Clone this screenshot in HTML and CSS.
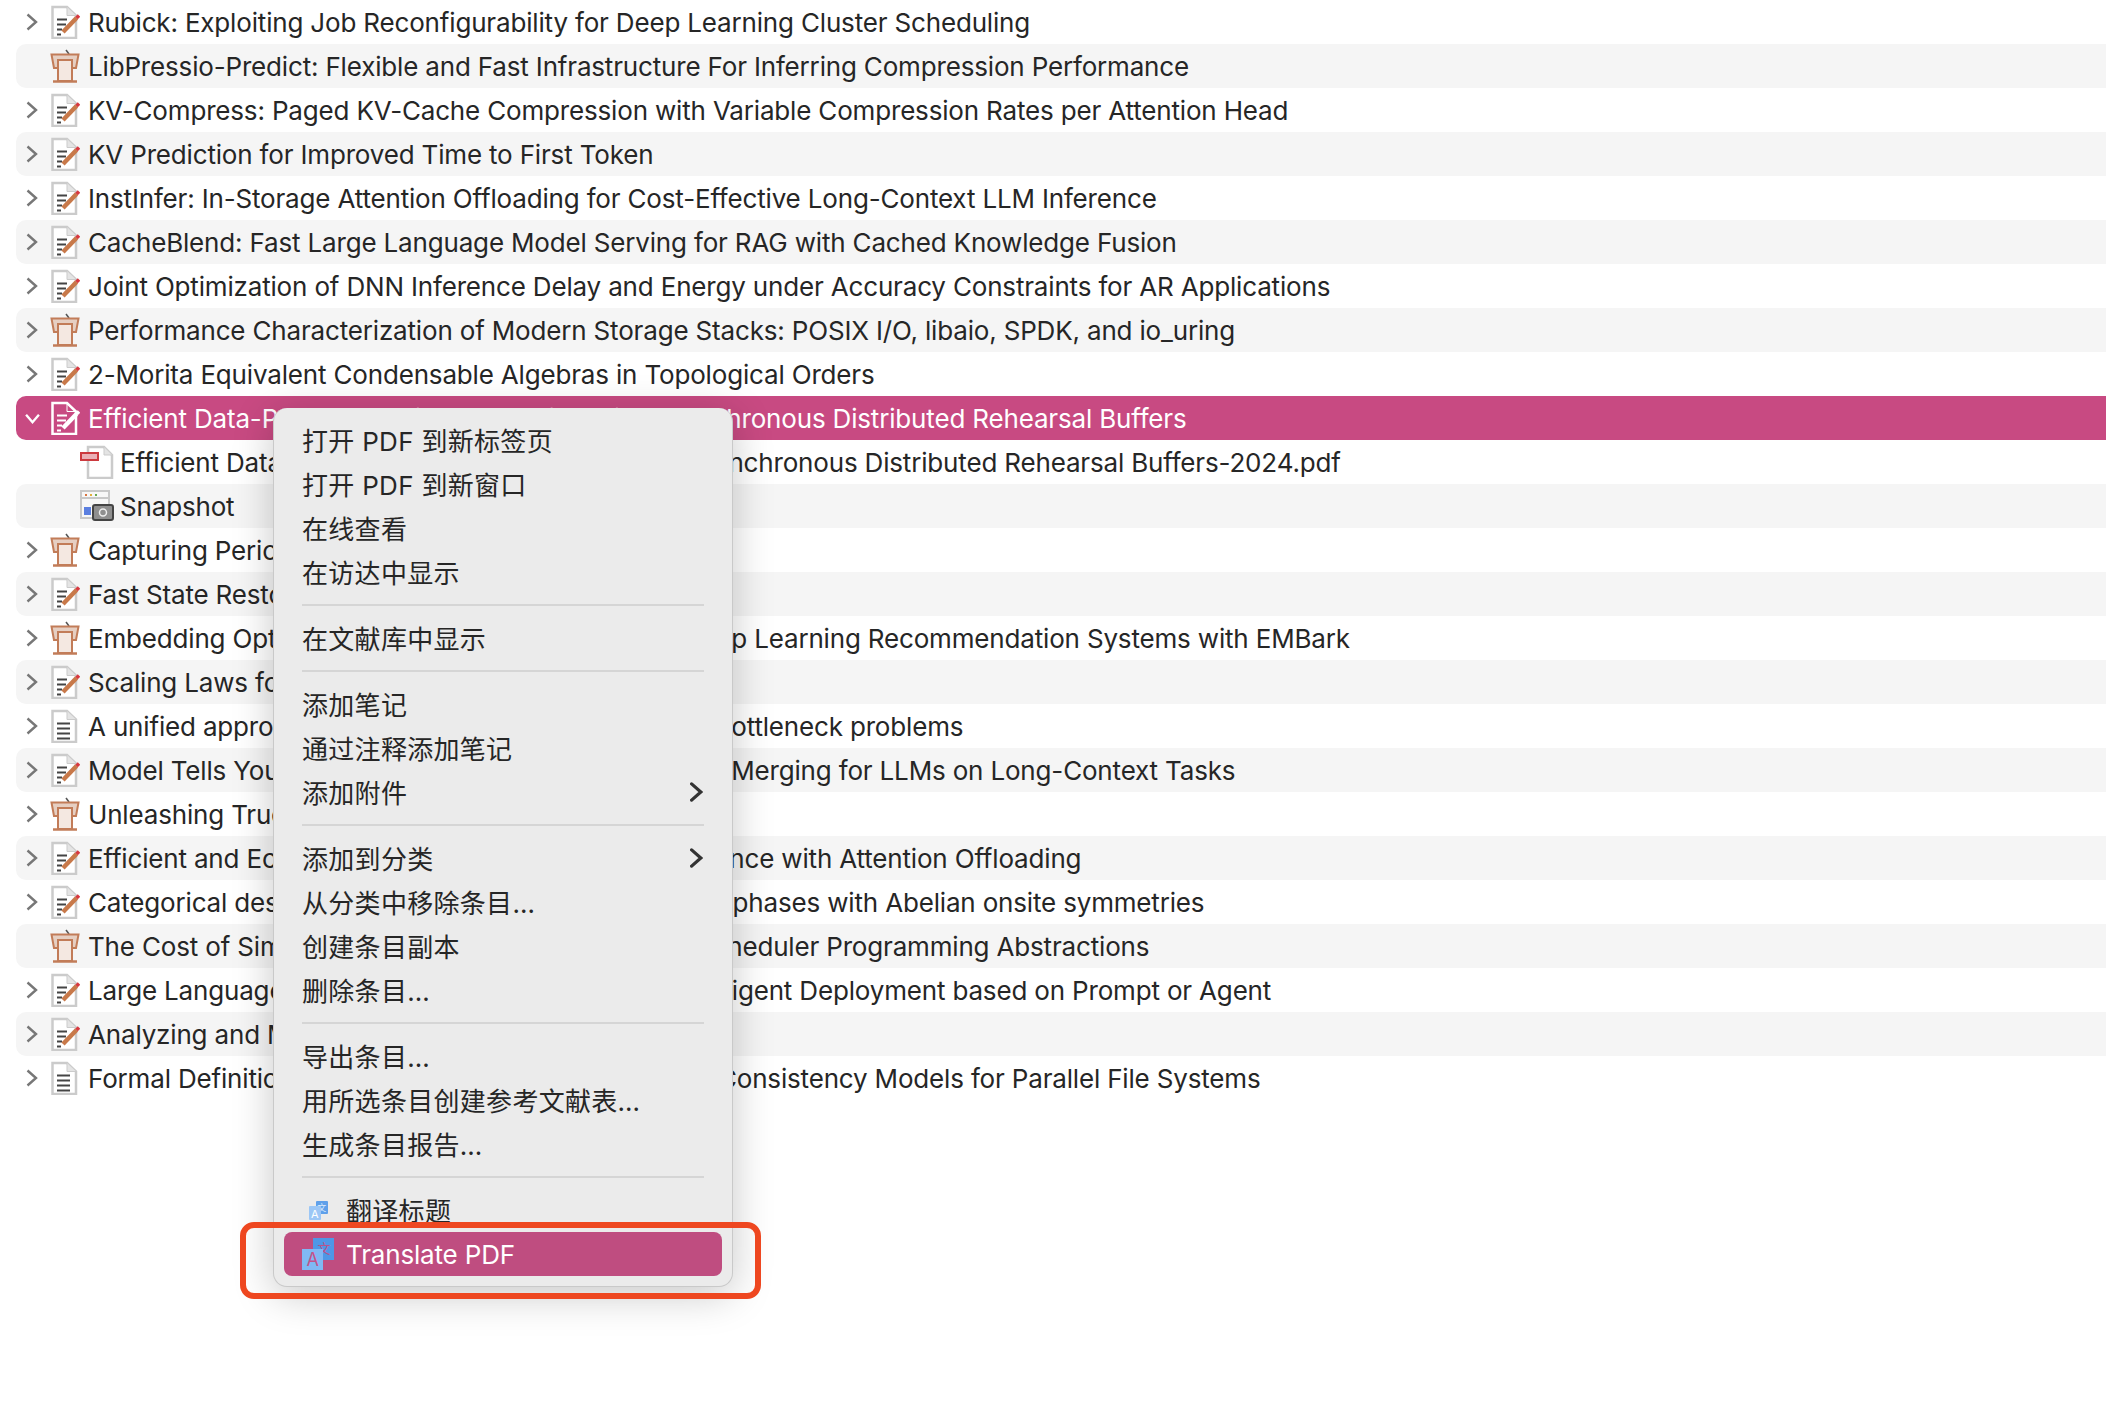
FILE: index.html
```html
<!DOCTYPE html>
<html lang="zh-CN">
<head>
    <meta charset="UTF-8">
    <title>Library</title>
    <link rel="stylesheet" href="styles.css">
</head>
<body>
    <svg class="defs" width="0" height="0">
        <symbol id="note" viewBox="0 0 30 34">
            <path class="page" d="M2.500 2H17L26 10.500V33H2.500Z"/>
            <path class="fold" d="M17 2V10.500H26"/>
            <path class="lines" d="M7 14.500H17M7 19.500H16M7 24.500H12M7 29.500H11"/>
            <path class="pencil" d="M13 27L26.500 13"/>
            <path class="tip" d="M26.500 13L29 10.500"/>
        </symbol>
        <symbol id="doc" viewBox="0 0 30 34">
            <path class="page" d="M2.500 2H17L26 10.500V33H2.500Z"/>
            <path class="fold" d="M17 2V10.500H26"/>
            <path class="lines" d="M7 14.500H20M7 19.500H20M7 24.500H20M7 29.500H20"/>
        </symbol>
        <symbol id="talk" viewBox="0 0 30 34">
            <path class="talk-tick" d="M16 1L19 5"/>
            <path class="talk-body" d="M8 11H22V32H8Z"/>
            <path class="talk-top" d="M1.500 5.500H28.500L26 19H22V11H8V19H4Z"/>
            <path class="talk-base" d="M3 32.500H27"/>
        </symbol>
        <symbol id="pdf" viewBox="0 0 34 34">
            <path class="page" d="M8 2H24L32 10V33H8Z"/>
            <path class="fold" d="M24 2V10H32"/>
            <rect class="pdf-tag" x="1" y="8" width="17" height="7"/>
        </symbol>
        <symbol id="snap" viewBox="0 0 34 32">
            <rect class="snap-win" x="1" y="1" width="28" height="27"/>
            <path class="snap-bar" d="M1 8H29"/>
            <path d="M5 5H7" stroke="#d9743f" stroke-width="2"/>
            <path d="M10 5H12" stroke="#e0b03a" stroke-width="2"/>
            <path d="M15 5H17" stroke="#6aa84f" stroke-width="2"/>
            <rect x="4" y="17" width="7" height="8" fill="#5b7fe0"/>
            <rect class="snap-cam" x="13" y="15" width="20" height="15" rx="2"/>
            <circle cx="23" cy="22.500" r="3.500" fill="none" stroke="#eee" stroke-width="1.500"/>
        </symbol>
        <symbol id="chev-right" viewBox="0 0 12 18">
            <path class="chev-path" d="M1.500 1.500L10 9L1.500 16.500"/>
        </symbol>
        <symbol id="chev-down" viewBox="0 0 18 12">
            <path d="M2 2L9 10L16 2" fill="none" stroke="currentColor" stroke-width="2.600"/>
        </symbol>
    </svg>

    <div class="list">
        <div class="row"><svg class="chev"><use href="#chev-right"/></svg><svg class="icon"><use href="#note"/></svg><span class="title">Rubick: Exploiting Job Reconfigurability for Deep Learning Cluster Scheduling</span></div>
        <div class="row"><span class="chev"></span><svg class="icon"><use href="#talk"/></svg><span class="title">LibPressio-Predict: Flexible and Fast Infrastructure For Inferring Compression Performance</span></div>
        <div class="row"><svg class="chev"><use href="#chev-right"/></svg><svg class="icon"><use href="#note"/></svg><span class="title">KV-Compress: Paged KV-Cache Compression with Variable Compression Rates per Attention Head</span></div>
        <div class="row"><svg class="chev"><use href="#chev-right"/></svg><svg class="icon"><use href="#note"/></svg><span class="title">KV Prediction for Improved Time to First Token</span></div>
        <div class="row"><svg class="chev"><use href="#chev-right"/></svg><svg class="icon"><use href="#note"/></svg><span class="title">InstInfer: In-Storage Attention Offloading for Cost-Effective Long-Context LLM Inference</span></div>
        <div class="row"><svg class="chev"><use href="#chev-right"/></svg><svg class="icon"><use href="#note"/></svg><span class="title">CacheBlend: Fast Large Language Model Serving for RAG with Cached Knowledge Fusion</span></div>
        <div class="row"><svg class="chev"><use href="#chev-right"/></svg><svg class="icon"><use href="#note"/></svg><span class="title">Joint Optimization of DNN Inference Delay and Energy under Accuracy Constraints for AR Applications</span></div>
        <div class="row"><svg class="chev"><use href="#chev-right"/></svg><svg class="icon"><use href="#talk"/></svg><span class="title">Performance Characterization of Modern Storage Stacks: POSIX I/O, libaio, SPDK, and io_uring</span></div>
        <div class="row"><svg class="chev"><use href="#chev-right"/></svg><svg class="icon"><use href="#note"/></svg><span class="title">2-Morita Equivalent Condensable Algebras in Topological Orders</span></div>
        <div class="row selected"><svg class="chev-open"><use href="#chev-down"/></svg><svg class="icon"><use href="#note"/></svg><span class="title">Efficient Data-Parallel Continual Learning with Asynchronous Distributed Rehearsal Buffers</span></div>
        <div class="row child"><svg class="icon pdf"><use href="#pdf"/></svg><span class="title">Efficient Data-Parallel Continual Learning with Asynchronous Distributed Rehearsal Buffers-2024.pdf</span></div>
        <div class="row child"><svg class="icon pdf"><use href="#snap"/></svg><span class="title">Snapshot</span></div>
        <div class="row"><svg class="chev"><use href="#chev-right"/></svg><svg class="icon"><use href="#talk"/></svg><span class="title">Capturing Periodic I/O</span></div>
        <div class="row"><svg class="chev"><use href="#chev-right"/></svg><svg class="icon"><use href="#note"/></svg><span class="title">Fast State Restoration</span></div>
        <div class="row"><svg class="chev"><use href="#chev-right"/></svg><svg class="icon"><use href="#talk"/></svg><span class="title">Embedding Optimization in Training Reduction in Deep Learning Recommendation Systems with EMBark</span></div>
        <div class="row"><svg class="chev"><use href="#chev-right"/></svg><svg class="icon"><use href="#note"/></svg><span class="title">Scaling Laws for Neural Language Models</span></div>
        <div class="row"><svg class="chev"><use href="#chev-right"/></svg><svg class="icon"><use href="#doc"/></svg><span class="title">A unified approach to non-convex optimization and bottleneck problems</span></div>
        <div class="row"><svg class="chev"><use href="#chev-right"/></svg><svg class="icon"><use href="#note"/></svg><span class="title">Model Tells You Where to Merge Adaptive KV Cache Merging for LLMs on Long-Context Tasks</span></div>
        <div class="row"><svg class="chev"><use href="#chev-right"/></svg><svg class="icon"><use href="#talk"/></svg><span class="title">Unleashing True Performance</span></div>
        <div class="row"><svg class="chev"><use href="#chev-right"/></svg><svg class="icon"><use href="#note"/></svg><span class="title">Efficient and Economic Large Language Model Inference with Attention Offloading</span></div>
        <div class="row"><svg class="chev"><use href="#chev-right"/></svg><svg class="icon"><use href="#note"/></svg><span class="title">Categorical descriptions of one-dimensional gapped phases with Abelian onsite symmetries</span></div>
        <div class="row"><span class="chev"></span><svg class="icon"><use href="#talk"/></svg><span class="title">The Cost of Simplicity: Understanding Datacenter Scheduler Programming Abstractions</span></div>
        <div class="row"><svg class="chev"><use href="#chev-right"/></svg><svg class="icon"><use href="#note"/></svg><span class="title">Large Language Model Selection Framework on Intelligent Deployment based on Prompt or Agent</span></div>
        <div class="row"><svg class="chev"><use href="#chev-right"/></svg><svg class="icon"><use href="#note"/></svg><span class="title">Analyzing and Mitigating</span></div>
        <div class="row"><svg class="chev"><use href="#chev-right"/></svg><svg class="icon"><use href="#doc"/></svg><span class="title">Formal Definitions and Performance Comparison of Consistency Models for Parallel File Systems</span></div>
    </div>

    <div class="menu">
        <div class="item">打开 PDF 到新标签页</div>
        <div class="item">打开 PDF 到新窗口</div>
        <div class="item">在线查看</div>
        <div class="item">在访达中显示</div>
        <div class="sep"></div>
        <div class="item">在文献库中显示</div>
        <div class="sep"></div>
        <div class="item">添加笔记</div>
        <div class="item">通过注释添加笔记</div>
        <div class="item">添加附件<svg class="sub"><use href="#chev-right"/></svg></div>
        <div class="sep"></div>
        <div class="item">添加到分类<svg class="sub"><use href="#chev-right"/></svg></div>
        <div class="item">从分类中移除条目…</div>
        <div class="item">创建条目副本</div>
        <div class="item">删除条目…</div>
        <div class="sep"></div>
        <div class="item">导出条目…</div>
        <div class="item">用所选条目创建参考文献表…</div>
        <div class="item">生成条目报告…</div>
        <div class="sep"></div>
        <div class="item with-icon">
            <svg class="tr-small" viewBox="0 0 19 19">
                <rect x="7" y="0" width="12" height="13" rx="1" fill="#5fa0ea"/>
                <text x="13" y="10" class="tr-back">文</text>
                <rect x="0" y="5" width="12" height="14" rx="1" fill="#9cc7f6"/>
                <text x="6" y="16.500" class="tr-front">A</text>
            </svg>翻译标题
        </div>
        <div class="item with-icon active">
            <svg class="tr-large" viewBox="0 0 32 32">
                <rect x="11" y="0" width="21" height="22" fill="#4f97e6"/>
                <text x="22" y="15" class="tr-back large">文</text>
                <rect x="0" y="11" width="21" height="21" fill="#80b8f4"/>
                <text x="10.500" y="28" class="tr-front large">A</text>
            </svg>Translate PDF
        </div>
    </div>

    <div class="callout"></div>
</body>
</html>
```

FILE: styles.css
```css
html, body {
    margin: 0;
    padding: 0;
    height: 100%;
    background-color: white;
    overflow: hidden;
}

body {
    font-family: Inter, "Noto Sans CJK SC", sans-serif;
    font-size: 26px;
    color: #262626;
    position: relative;
}

.defs {
    position: absolute;
}

.row {
    display: flex;
    align-items: center;
    height: 44px;
    margin-left: 16px;
    padding-left: 10px;
    border-radius: 10px 0 0 10px;
    white-space: nowrap;
}

.row:nth-child(even) {
    background-color: #f5f5f5;
}

.row.selected {
    background-color: #c84a82;
    color: white;
}

.title {
    padding-top: 1px;
    letter-spacing: -0.17px;
}

.chev {
    width: 12px;
    height: 18px;
    margin-right: 12px;
    color: #777;
    flex: none;
}

.chev-path {
    fill: none;
    stroke: currentColor;
    stroke-width: var(--chev-width, 2.400);
    stroke-linecap: var(--chev-cap, butt);
}

.chev-open {
    width: 17px;
    height: 11px;
    margin-left: -2px;
    margin-right: 9px;
    color: white;
    flex: none;
}

.icon {
    --page: #cbcbcb;
    --paper: white;
    --fold: #e4e4e4;
    --line: #444;
    --pencil: #c8794a;
    --tip: #d8383f;
    width: 30px;
    height: 34px;
    margin-right: 8px;
    flex: none;
}

.selected .icon {
    --page: white;
    --paper: none;
    --fold: none;
    --line: white;
    --pencil: white;
    --tip: white;
}

.child {
    padding-left: 64px;
}

.child .icon.pdf {
    width: 34px;
    height: 34px;
    margin-right: 6px;
}

.page { fill: var(--paper); stroke: var(--page); stroke-width: 2.500; }
.fold { fill: var(--fold); stroke: var(--page); stroke-width: 1; }
.lines { fill: none; stroke: var(--line); stroke-width: 2; }
.pencil { fill: none; stroke: var(--pencil); stroke-width: 4.500; }
.tip { fill: none; stroke: var(--tip); stroke-width: 3.500; }

.selected .pencil { stroke-width: 3; }

.talk-tick { fill: none; stroke: #555; stroke-width: 1.500; }
.talk-body { fill: #f4e8e1; stroke: #c27c58; stroke-width: 2; }
.talk-top { fill: #e6cfc2; stroke: #c27c58; stroke-width: 2; }
.talk-base { fill: none; stroke: #c27c58; stroke-width: 2.500; }

.pdf-tag { fill: #eab0b6; stroke: #cc3a3f; stroke-width: 2; }

.snap-win { fill: #f7f7f7; stroke: #c8c8c8; stroke-width: 2; }
.snap-bar { stroke: #c8c8c8; stroke-width: 2; }
.snap-cam { fill: #8f8f8f; stroke: #444; stroke-width: 2; }

/* context menu */
.menu {
    position: absolute;
    left: 273px;
    top: 408px;
    width: 460px;
    box-sizing: border-box;
    padding: 10px 10px 10px;
    background-color: #ebebeb;
    border: 1px solid #c9c9c9;
    border-top: none;
    border-radius: 14px;
    box-shadow: 0 8px 40px rgba(0, 0, 0, 0.22);
}

.item {
    display: flex;
    align-items: center;
    box-sizing: border-box;
    height: 44px;
    padding-left: 18px;
    padding-bottom: 1px;
    letter-spacing: 0.3px;
    white-space: nowrap;
    position: relative;
}

.item.with-icon {
    padding-left: 62px;
}

.item.active {
    background-color: #bf4d80;
    color: white;
    border-radius: 8px;
    padding-bottom: 0;
    letter-spacing: -0.17px;
}

.sep {
    height: 2px;
    margin: 10px 18px;
    background-color: #d5d5d5;
}

.sub {
    --chev-width: 3;
    --chev-cap: round;
    position: absolute;
    left: 406px;
    top: 12px;
    width: 13px;
    height: 20px;
    color: #333;
}

.tr-small {
    position: absolute;
    left: 25px;
    top: 13px;
    width: 19px;
    height: 19px;
}

.tr-large {
    position: absolute;
    left: 18px;
    top: 6px;
    width: 32px;
    height: 32px;
}

.tr-back {
    font-size: 9px;
    fill: #dcebfb;
    text-anchor: middle;
}

.tr-front {
    font-size: 11px;
    fill: white;
    text-anchor: middle;
}

.tr-back.large {
    font-size: 13px;
    fill: #b9548a;
}

.tr-front.large {
    font-size: 18px;
    fill: #c4528a;
}

/* red annotation box */
.callout {
    position: absolute;
    left: 240px;
    top: 1222px;
    width: 521px;
    height: 77px;
    box-sizing: border-box;
    border: 6px solid #ee4720;
    border-radius: 14px;
}
```
